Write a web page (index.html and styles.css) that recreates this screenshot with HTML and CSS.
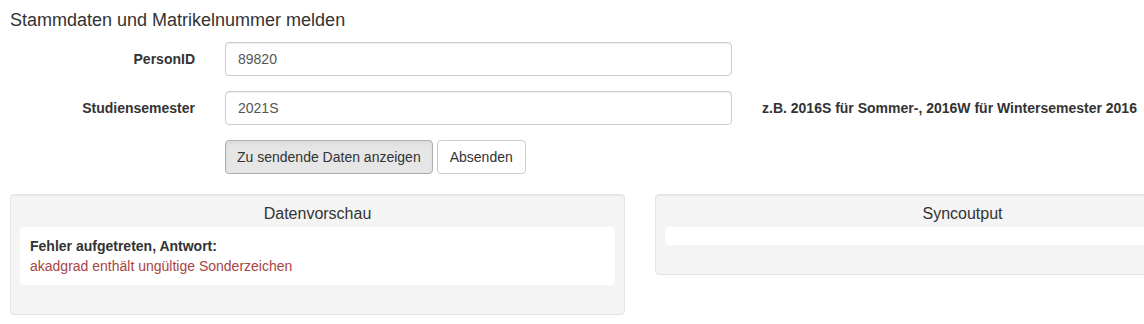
FILE: index.html
```
<!DOCTYPE html>
<html lang="de">
<head>
  <meta charset="UTF-8">
  <title>Stammdaten und Matrikelnummer melden</title>
  <link rel="stylesheet" href="styles.css">
</head>
<body>
  <div class="page">
    <h3 class="page-title">Stammdaten und Matrikelnummer melden</h3>

    <form class="form-horizontal">
      <div class="form-group">
        <label class="control-label" for="personid">PersonID</label>
        <div class="field">
          <input id="personid" class="form-control" type="text" value="89820">
        </div>
      </div>

      <div class="form-group">
        <label class="control-label" for="semester">Studiensemester</label>
        <div class="field">
          <input id="semester" class="form-control" type="text" value="2021S">
        </div>
        <div class="hint">z.B. 2016S für Sommer-, 2016W für Wintersemester 2016</div>
      </div>

      <div class="form-group">
        <div class="control-label"></div>
        <div class="field buttons">
          <button type="button" class="btn btn-active">Zu sendende Daten anzeigen</button>
          <button type="button" class="btn">Absenden</button>
        </div>
      </div>
    </form>

    <div class="output-row">
      <div class="output-col">
        <div class="well">
          <div class="well-title">Datenvorschau</div>
          <div class="well-body">
            <strong>Fehler aufgetreten, Antwort:</strong>
            <div class="text-danger">akadgrad enthält ungültige Sonderzeichen</div>
          </div>
        </div>
      </div>
      <div class="output-col">
        <div class="well">
          <div class="well-title">Syncoutput</div>
          <div class="well-body"></div>
        </div>
      </div>
    </div>
  </div>
</body>
</html>
```

FILE: styles.css
```
body {
  margin: 0;
  font-family: 'Liberation Sans', Arial, sans-serif;
  font-size: 14px;
  line-height: 20px;
  color: #333;
  background: #fff;
  overflow: hidden;
}

.page {
  width: 1290px;
  padding: 0 10px;
}

.page-title {
  font-size: 18px;
  font-weight: normal;
  line-height: 20px;
  margin: 10px 0 12px;
}

.form-group {
  display: flex;
  align-items: flex-start;
  margin-bottom: 15px;
}

.control-label {
  width: 185px;
  padding: 7px 15px 0 0;
  text-align: right;
  font-weight: bold;
  flex: none;
}

.field {
  width: 507px;
  padding: 0 15px;
  flex: none;
}

.form-control {
  display: block;
  box-sizing: border-box;
  width: 100%;
  height: 34px;
  padding: 6px 12px;
  font: inherit;
  color: #555;
  background: #fff;
  border: 1px solid #ccc;
  border-radius: 4px;
  box-shadow: inset 0 1px 1px rgba(0, 0, 0, 0.075);
}

.hint {
  padding: 7px 15px 0;
  font-weight: bold;
  white-space: nowrap;
}

.buttons {
  display: flex;
  gap: 4px;
}

.btn {
  height: 34px;
  padding: 6px 12px;
  font: inherit;
  color: #333;
  background: #fff;
  border: 1px solid #ccc;
  border-radius: 4px;
}

.btn-active {
  padding: 6px 11px;
  background: #e6e6e6;
  border-color: #adadad;
  box-shadow: inset 0 3px 5px rgba(0, 0, 0, 0.05);
}

.output-row {
  display: flex;
  align-items: flex-start;
  gap: 30px;
  margin-top: 20px;
}

.output-col {
  width: 615px;
  flex: none;
}

.well {
  padding: 9px 9px 29px;
  background: #f4f4f4;
  border: 1px solid #e3e3e3;
  border-radius: 4px;
  box-shadow: inset 0 1px 1px rgba(0, 0, 0, 0.05);
}

.well-title {
  font-size: 16px;
  line-height: 20px;
  text-align: center;
  margin-bottom: 3px;
}

.well-body {
  padding: 9px 10px;
  background: #fff;
  border-radius: 4px;
}

.text-danger {
  color: #a94442;
}
```
